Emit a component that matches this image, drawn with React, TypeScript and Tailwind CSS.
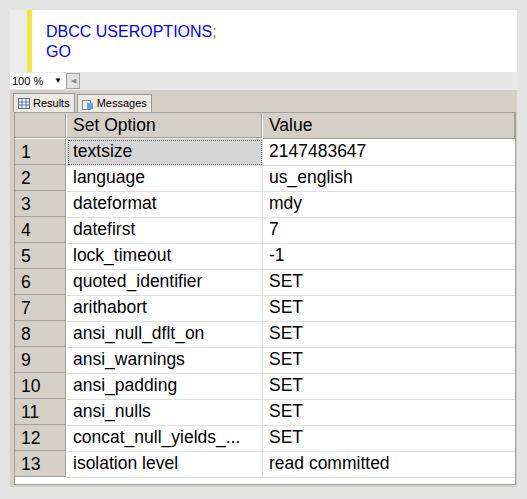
import React from "react";

const rows: [string, string][] = [
  ["textsize", "2147483647"],
  ["language", "us_english"],
  ["dateformat", "mdy"],
  ["datefirst", "7"],
  ["lock_timeout", "-1"],
  ["quoted_identifier", "SET"],
  ["arithabort", "SET"],
  ["ansi_null_dflt_on", "SET"],
  ["ansi_warnings", "SET"],
  ["ansi_padding", "SET"],
  ["ansi_nulls", "SET"],
  ["concat_null_yields_...", "SET"],
  ["isolation level", "read committed"],
];

export default function App() {
  return (
    <div className="w-[527px] h-[499px] bg-[#e3e3e3] p-[10px] pb-[12px] flex flex-col" style={{ fontFamily: '"Liberation Sans", Arial, sans-serif' }}>
      <div className="flex-1 flex flex-col bg-[#d4d0c8]">
        <div className="h-[62px] bg-white flex">
          <div className="w-[17px] bg-[#ececec]" />
          <div className="w-[5px] bg-[#f5e642]" />
          <div className="pl-[14px] pt-[12px] text-[16px] leading-[20px] text-[#0000ff]">
            <div>DBCC USEROPTIONS<span className="text-[#808080]">;</span></div>
            <div>GO</div>
          </div>
        </div>
        <div className="h-[18px] bg-[#e8e8e8] flex items-center">
          <div className="w-[56px] h-[16px] bg-white text-[11px] leading-[16px] pl-[2px] flex justify-between pr-[4px]">
            <span>100 %</span><span className="text-[8px]">▼</span>
          </div>
          <div className="w-[14px] h-[16px] border border-[#a0a0a0] bg-[#e0e0e0] text-[7px] text-[#888] flex items-center justify-center">◀</div>
        </div>
        <div className="h-[22px] bg-[#d4d0c8] flex items-end pl-[3px] pt-[3px]">
          <div className="h-[19px] px-[4px] flex items-center gap-[3px] bg-[#ece9e2] border border-b-0 border-[#999] text-[11px]">
            <svg width="12" height="11"><rect x="0.5" y="0.5" width="11" height="10" fill="#fff" stroke="#5070a0"/><path d="M1 4h10M1 7h10M4 1v9M8 1v9" stroke="#5070a0"/></svg>
            Results
          </div>
          <div className="h-[18px] px-[4px] flex items-center gap-[3px] bg-[#ece9e2] border border-b-0 border-[#999] text-[11px] ml-[2px]">
            <svg width="12" height="12"><rect x="0.5" y="2.5" width="8" height="9" fill="#eee" stroke="#7a8aa0"/><rect x="5" y="5" width="6" height="6" fill="#6aa0d8"/></svg>
            Messages
          </div>
        </div>
        <div className="flex-1 ml-[4px] mr-[1px] mb-[2px] bg-white border border-[#a0a0a0] text-[17.5px] text-black">
          <div className="grid grid-cols-[52px_196px_1fr] h-[26px] bg-[#d4d0c8]">
            <div className="border-r border-b border-white shadow-[inset_-1px_-1px_0_#a0a0a0]" />
            <div className="pl-[6px] leading-[25px] border-r border-b border-white shadow-[inset_-1px_-1px_0_#a0a0a0]">Set Option</div>
            <div className="pl-[6px] leading-[25px] shadow-[inset_-1px_-1px_0_#a0a0a0]">Value</div>
          </div>
          {rows.map(([k, v], i) => (
            <div key={i} className="grid grid-cols-[52px_196px_1fr] h-[26px]">
              <div className="bg-[#d4d0c8] pl-[6px] leading-[26px] border-r border-b border-white shadow-[inset_-1px_-1px_0_#a0a0a0]">{i + 1}</div>
              <div className={`pl-[6px] leading-[25px] border-r border-b border-[#e0e0e0] ${i === 0 ? "bg-[#d6d6d6] outline-1 outline-dotted outline-[#666] -outline-offset-2" : ""}`}>{k}</div>
              <div className="pl-[6px] leading-[25px] border-b border-[#e0e0e0]">{v}</div>
            </div>
          ))}
        </div>
      </div>
    </div>
  );
}
